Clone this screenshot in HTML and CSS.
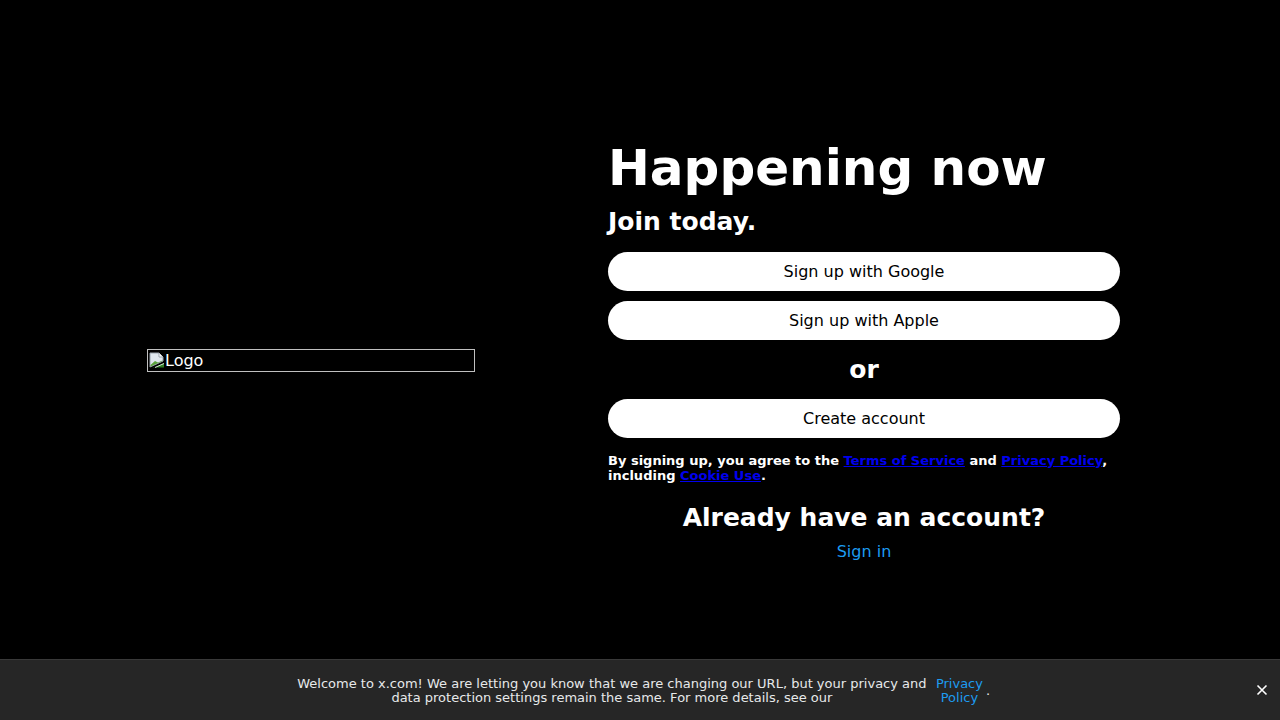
FILE: index.html
```html
<!DOCTYPE html>
<html lang="en">
<head>
<meta charset="utf-8">
<title>X</title>
<link rel="stylesheet" href="styles.css">
</head>
<body>
<main class="page">
  <div class="logo-col">
    <div class="logo-box">
      <svg class="broken" width="16" height="16" viewBox="0 0 16 16" aria-hidden="true">
        <path d="M1 1 H10 L14 5 V9 L1 15 Z" fill="#dfe6ee" stroke="#9aa3ad" stroke-width="1"/>
        <path d="M10 1 V5 H14" fill="#ffffff" stroke="#9aa3ad" stroke-width="1"/>
        <path d="M1.5 13 L6 9 L9 10.5 L13.5 8.5 V9 L1.5 14.5 Z" fill="#5aa33a"/>
        <path d="M4 16 L15 11 V15.5 H4 Z" fill="#2e7d24"/>
        <path d="M6 15.5 L15 11.5" stroke="#ffffff" stroke-width="0.8"/>
      </svg>
      <span class="logo-alt">Logo</span>
    </div>
  </div>
  <section class="auth">
    <h1 class="title">Happening now</h1>
    <h2 class="subtitle">Join today.</h2>
    <button class="pill">Sign up with Google</button>
    <button class="pill">Sign up with Apple</button>
    <div class="or">or</div>
    <button class="pill">Create account</button>
    <p class="terms">By signing up, you agree to the <a href="#">Terms of Service</a> and <a href="#">Privacy Policy</a>, including <a href="#">Cookie Use</a>.</p>
    <h3 class="already">Already have an account?</h3>
    <a class="signin" href="#">Sign in</a>
  </section>
</main>
<div class="banner">
  <div class="banner-inner">
    <span class="banner-msg">Welcome to x.com! We are letting you know that we are changing our URL, but your privacy and data protection settings remain the same. For more details, see our</span>
    <a class="banner-link" href="#">Privacy Policy</a>
    <span class="banner-dot">.</span>
  </div>
  <button class="close" aria-label="Close">
    <svg width="12" height="12" viewBox="0 0 12 12"><path d="M1.5 1.5 L10.5 10.5 M10.5 1.5 L1.5 10.5" stroke="#ffffff" stroke-width="1.6"/></svg>
  </button>
</div>
</body>
</html>
```

FILE: styles.css
```css
html, body {
  margin: 0;
  padding: 0;
  background: #000;
  color: #fff;
  font-family: "DejaVu Sans", sans-serif;
}

.page {
  height: 720px;
  display: flex;
  align-items: center;
  padding-left: 147px;
  box-sizing: border-box;
}

.logo-col {
  width: 328px;
  margin-right: 133px;
  display: flex;
  align-items: center;
}

.logo-box {
  width: 328px;
  height: 23px;
  box-sizing: border-box;
  border: 1px solid #c0c0c0;
  display: flex;
  align-items: center;
  padding-left: 1px;
  font-size: 16px;
  color: #fff;
}

.broken {
  display: block;
  flex: none;
}

.logo-alt {
  line-height: 19px;
}

.auth {
  width: 512px;
  display: flex;
  flex-direction: column;
  padding-bottom: 19px;
}

.title {
  margin: 0;
  font-size: 50px;
  font-weight: 700;
  line-height: 58px;
}

.subtitle {
  margin: 10px 0 16px;
  font-size: 25px;
  font-weight: 700;
  line-height: 29px;
}

.pill {
  height: 39px;
  border: none;
  border-radius: 9999px;
  background: #fff;
  color: #000;
  font-family: "DejaVu Sans", sans-serif;
  font-size: 16px;
  padding: 0;
  margin: 0 0 10px;
}

.or {
  text-align: center;
  font-size: 25px;
  font-weight: 700;
  line-height: 29px;
  margin: 5px 0 15px;
}

.terms {
  margin: 5px 0 0;
  font-size: 13px;
  font-weight: 700;
  line-height: 15px;
}

.terms a {
  color: #0000ee;
}

.already {
  margin: 20px 0 0;
  text-align: center;
  font-size: 25px;
  font-weight: 700;
  line-height: 29px;
}

.signin {
  align-self: center;
  margin-top: 10px;
  color: #1d9bf0;
  text-decoration: none;
  font-size: 16px;
  line-height: 20px;
}

.banner {
  position: fixed;
  left: 0;
  right: 0;
  bottom: 0;
  height: 61px;
  box-sizing: border-box;
  background: #262626;
  border-top: 1px solid #393939;
  display: flex;
  align-items: center;
  justify-content: center;
}

.banner-inner {
  display: flex;
  align-items: center;
  padding-left: 6px;
  padding-top: 2px;
  font-size: 13px;
  line-height: 14px;
  color: #e7e9ea;
}

.banner-msg {
  width: 632px;
  text-align: center;
}

.banner-link {
  width: min-content;
  margin-left: 8px;
  text-align: center;
  color: #1d9bf0;
  text-decoration: none;
}

.banner-dot {
  margin-left: 3px;
}

.close {
  position: absolute;
  right: 11px;
  top: 23px;
  width: 14px;
  height: 14px;
  padding: 0;
  border: none;
  background: transparent;
  display: flex;
  align-items: center;
  justify-content: center;
}
```
